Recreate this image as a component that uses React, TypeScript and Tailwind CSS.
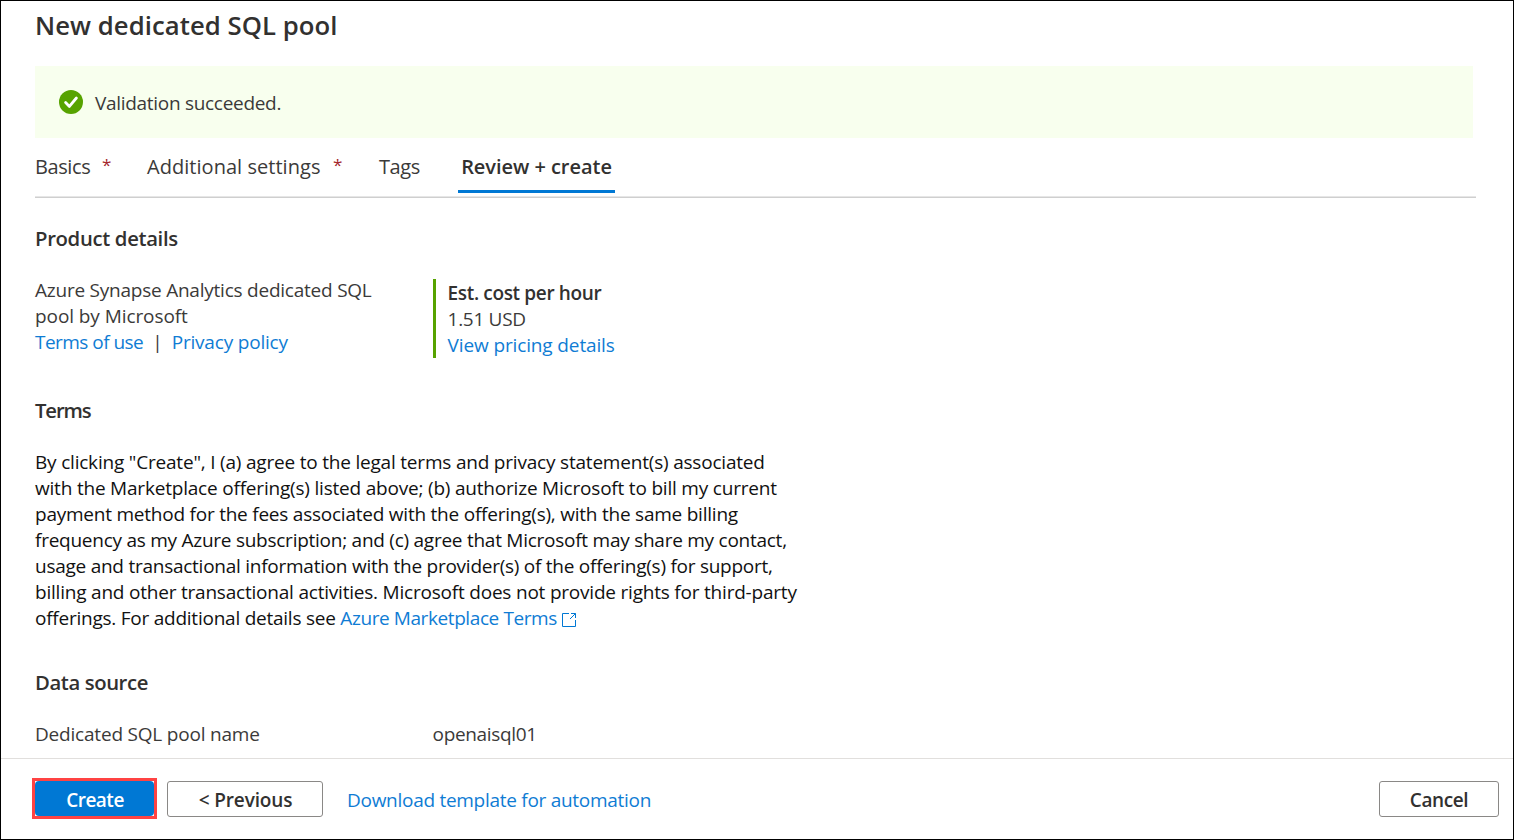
import type { ReactNode } from "react";

function Line({ className = "", children }: { className?: string; children: ReactNode }) {
  return (
    <div className="flex h-[26px] whitespace-pre leading-[26px]">
      <span className={className}>{children}</span>
    </div>
  );
}

function Heading({ className = "", children }: { className?: string; children: ReactNode }) {
  return (
    <h2 className={`h-7 whitespace-pre text-[20.3px] font-semibold leading-[26px] text-[#323130] ${className}`}>
      {children}
    </h2>
  );
}

function SuccessIcon() {
  return (
    <svg width="24" height="24" viewBox="0 0 24 24" className="shrink-0">
      <circle cx="12" cy="12" r="12" fill="#57a300" />
      <path d="M6.6 12.6 10.4 16.4 17.4 8" fill="none" stroke="#fff" strokeWidth="2.8" strokeLinecap="round" strokeLinejoin="round" />
    </svg>
  );
}

function ExternalIcon() {
  return (
    <svg width="14" height="14" viewBox="0 0 14 14" fill="none" stroke="#0078d4" strokeWidth="1" className="mt-2 shrink-0">
      <path d="M7 .5H.5v13h13V7M9 .5h4.5V5M13.5 .5 8 6" />
    </svg>
  );
}

export default function App() {
  return (
    <div className="flex h-[840px] w-[1514px] flex-col overflow-hidden border border-black bg-white font-['Open_Sans','Noto_Sans',sans-serif] text-[19px] text-[#323130]">
      <main className="flex h-[757px] shrink-0 flex-col overflow-hidden pl-[34px] pt-[7px]">
        <h1 className="h-9 whitespace-pre text-[25.7px] font-semibold leading-9 tracking-[0.06px] text-[#323130]">
          New dedicated SQL pool
        </h1>

        <div className="mt-[22px] flex h-[72px] w-[1438px] shrink-0 items-center bg-[#f8ffee] pl-6 text-[#3b3a39]">
          <SuccessIcon />
          <span className="ml-3 mt-0.5 whitespace-pre tracking-[-0.3px]">Validation succeeded.</span>
        </div>

        <nav className="flex h-[60px] w-[1441px] shrink-0 items-start border-b border-[#cfcfcf] pt-[15px] text-[20px] leading-7 text-[#3b3a39] shadow-[inset_0_-1px_0_#e6e6e6]">
          <div className="flex w-[112px] whitespace-pre">
            <span className="w-[67px] tracking-[-0.4px]">Basics</span>
            <span className="text-[17px] leading-6 text-[#a4262c]">*</span>
          </div>
          <div className="flex w-[232px] whitespace-pre">
            <span className="w-[186px] tracking-[0.04px]">Additional settings</span>
            <span className="text-[17px] leading-6 text-[#a4262c]">*</span>
          </div>
          <div className="w-[79px] whitespace-pre">
            <span className="tracking-[-0.45px]">Tags</span>
          </div>
          <div className="flex h-10 w-[157px] justify-center whitespace-pre border-b-[3px] border-[#0078d4] font-semibold text-[#323130]">
            <span className="tracking-[-0.04px]">Review + create</span>
          </div>
        </nav>

        <Heading className="mt-[27px] tracking-[-0.33px]">Product details</Heading>
        <section className="mt-[24px] flex h-[81px] shrink-0 items-start text-[#3b3a39]">
          <div className="w-[398px]">
            <Line className="tracking-[-0.23px]">Azure Synapse Analytics dedicated SQL</Line>
            <Line className="tracking-[-0.08px]">pool by Microsoft</Line>
            <div className="flex">
              <Line className="text-[#0f7cd4] tracking-[-0.54px]">Terms of use</Line>
              <span className="w-[28.5px] text-center leading-[26px]">|</span>
              <Line className="text-[#0f7cd4] tracking-[-0.19px]">Privacy policy</Line>
            </div>
          </div>
          <div className="mt-[2px] h-[79px] border-l-[3px] border-[#57a300] pl-[11.6px] pt-px">
            <Line className="font-semibold text-[#323130] tracking-[-0.35px]">Est. cost per hour</Line>
            <Line className="tracking-[-0.3px]">1.51 USD</Line>
            <Line className="text-[#0f7cd4] tracking-[-0.13px]">View pricing details</Line>
          </div>
        </section>

        <Heading className="mt-[39px] tracking-[-1.1px]">Terms</Heading>
        <section className="mt-[24px] text-[#111111]">
          <Line className="tracking-[-0.2px]">{'By clicking "Create", I (a) agree to the legal terms and privacy statement(s) associated'}</Line>
          <Line className="tracking-[-0.2px]">with the Marketplace offering(s) listed above; (b) authorize Microsoft to bill my current</Line>
          <Line className="tracking-[-0.23px]">payment method for the fees associated with the offering(s), with the same billing</Line>
          <Line className="tracking-[-0.255px]">frequency as my Azure subscription; and (c) agree that Microsoft may share my contact,</Line>
          <Line className="tracking-[-0.255px]">usage and transactional information with the provider(s) of the offering(s) for support,</Line>
          <Line className="tracking-[-0.21px]">billing and other transactional activities. Microsoft does not provide rights for third-party</Line>
          <div className="flex">
            <Line className="tracking-[-0.24px]">offerings. For additional details see </Line>
            <Line className="mr-[5px] text-[#0f7cd4] tracking-[-0.41px]">Azure Marketplace Terms</Line>
            <ExternalIcon />
          </div>
        </section>

        <Heading className="mt-[38px] tracking-[-0.4px]">Data source</Heading>
        <section className="mt-[24px] flex text-[#3b3a39]">
          <div className="w-[397.6px]">
            <Line className="tracking-[-0.2px]">Dedicated SQL pool name</Line>
          </div>
          <Line className="tracking-[-0.35px]">openaisql01</Line>
        </section>
      </main>

      <footer className="flex h-[81px] shrink-0 items-start border-t border-[#e1dfdd] pl-[31px] pr-[14px] pt-[19px]">
        <div className="h-[41px] w-[125px] border-[3px] border-[#ff4343]">
          <button className="flex h-full w-full items-center justify-center whitespace-pre rounded-sm bg-[#0078d4] pl-px pt-[3px] font-semibold tracking-[-0.5px] text-white">
            Create
          </button>
        </div>
        <button className="ml-2.5 mt-[3px] flex h-9 w-[156px] items-center justify-center whitespace-pre rounded-[3px] border border-[#8a8886] pl-px pt-[3px] font-semibold tracking-[-0.15px]">
          {"< Previous"}
        </button>
        <div className="ml-[24px] mt-[9px]">
          <Line className="text-[#0f7cd4] tracking-[-0.28px]">Download template for automation</Line>
        </div>
        <button className="ml-auto mt-[3px] flex h-9 w-[120px] items-center justify-center whitespace-pre rounded-[3px] border border-[#8a8886] pt-[3px] font-semibold tracking-[-0.4px]">
          Cancel
        </button>
      </footer>
    </div>
  );
}
